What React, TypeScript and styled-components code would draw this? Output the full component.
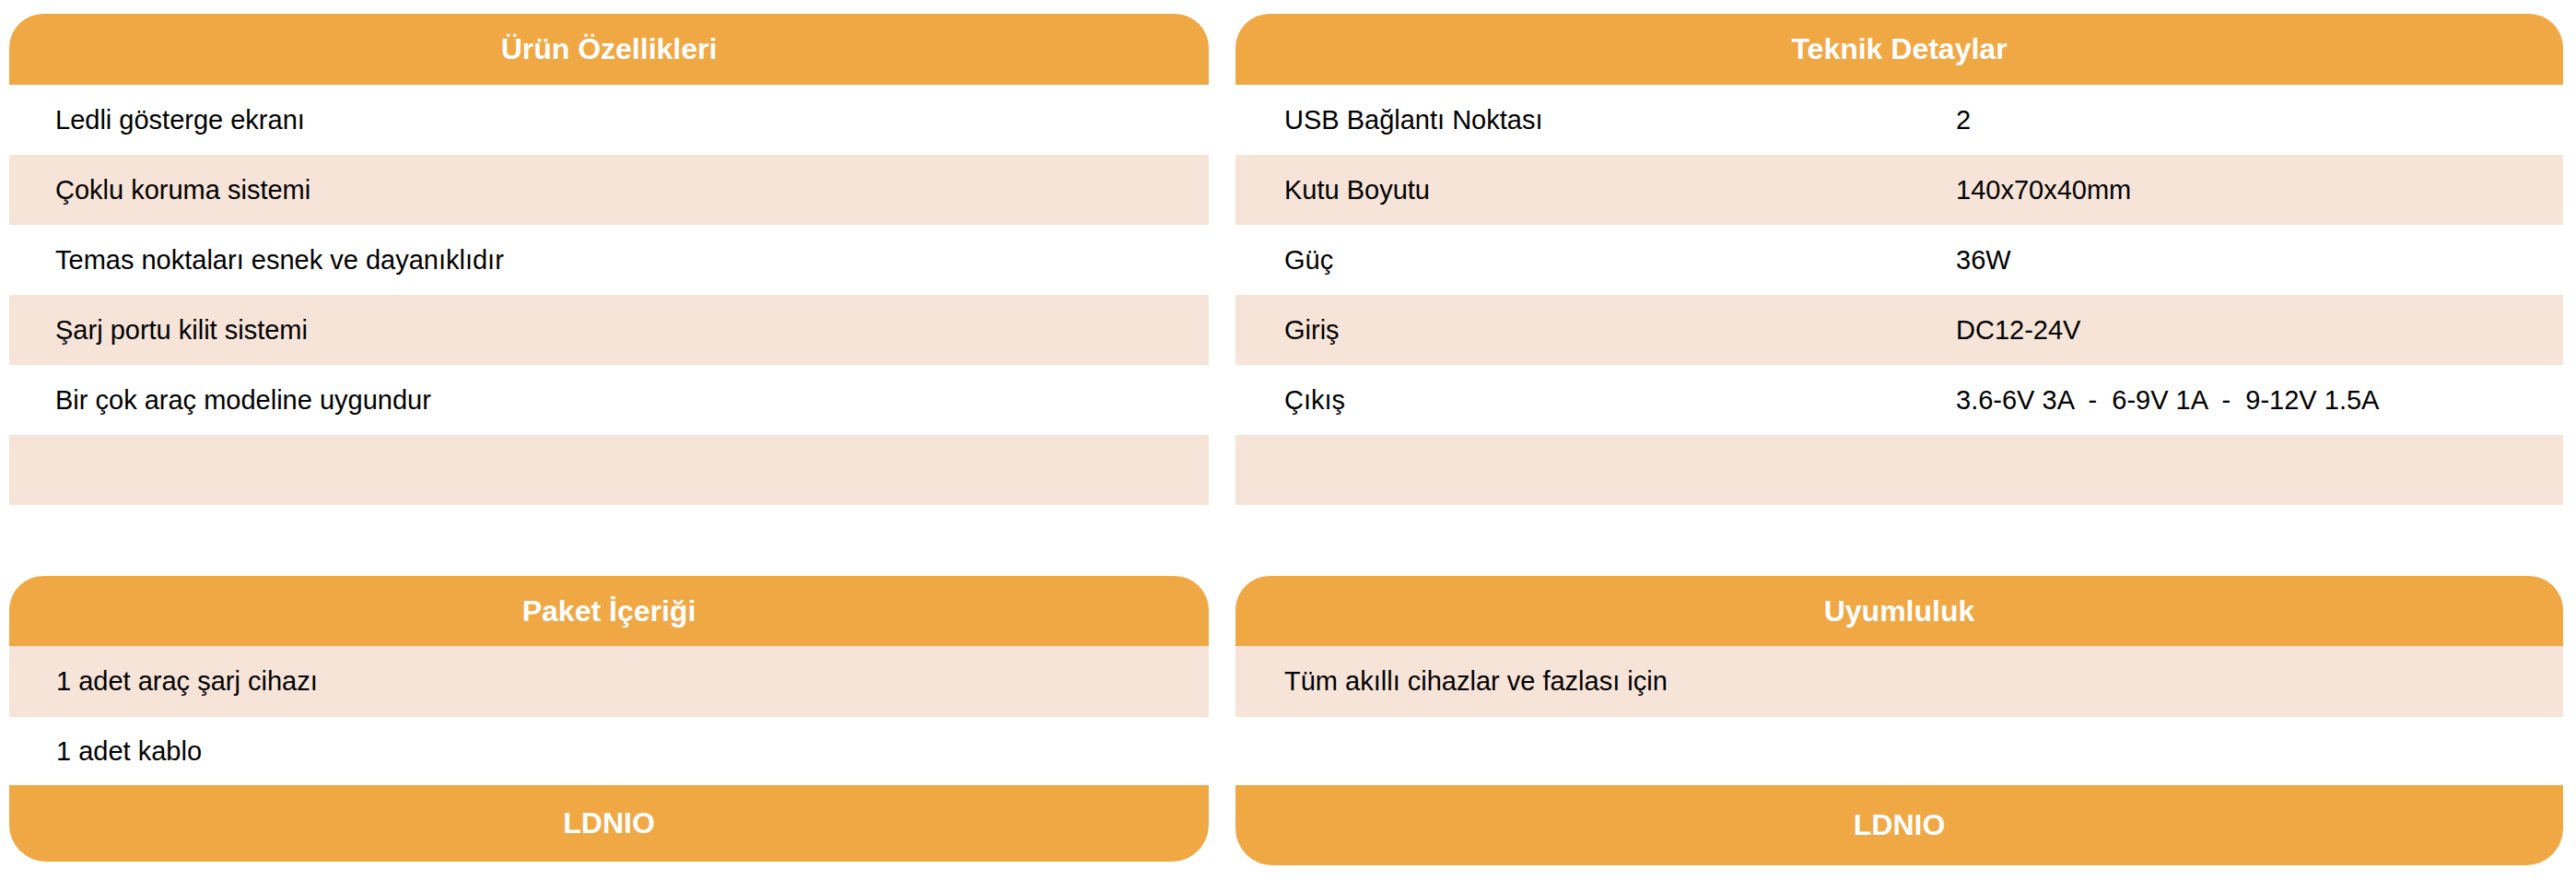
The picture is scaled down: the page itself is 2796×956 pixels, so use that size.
import React from "react";
import styled, { createGlobalStyle } from "styled-components";

const GlobalStyle = createGlobalStyle`
  html, body {
    margin: 0;
    padding: 0;
    background: #ffffff;
  }
  body {
    font-family: "Liberation Sans", Arial, Helvetica, sans-serif;
    color: #000;
  }
`;

const ORANGE = "#f0a845";
const PINK = "#f7e4d8";

const Page = styled.div`
  display: grid;
  grid-template-columns: 1302px 1441px;
  column-gap: 29px;
  row-gap: 77px;
  padding: 15px 0 0 10px;
  width: 2796px;
  box-sizing: border-box;
`;

const Card = styled.section`
  display: flex;
  flex-direction: column;
`;

const CardHeader = styled.h2<{ $h?: number }>`
  margin: 0;
  height: ${(p) => p.$h ?? 77}px;
  background: ${ORANGE};
  border-radius: 37px 37px 0 0;
  color: #ffffff;
  font-size: 32px;
  font-weight: 700;
  display: flex;
  align-items: center;
  justify-content: center;
`;

const Row = styled.div<{ $shaded?: boolean; $pad: number; $cols?: string; $h?: number }>`
  height: ${(p) => p.$h ?? 76}px;
  background: ${(p) => (p.$shaded ? PINK : "#ffffff")};
  display: grid;
  grid-template-columns: ${(p) => p.$cols ?? "1fr"};
  align-items: center;
  padding-left: ${(p) => p.$pad}px;
  font-size: 29px;
  box-sizing: border-box;
`;

const Cell = styled.span`
  white-space: pre;
`;

const Footer = styled.div<{ $h: number }>`
  height: ${(p) => p.$h}px;
  background: ${ORANGE};
  border-radius: 0 0 40px 40px;
  color: #ffffff;
  font-size: 32px;
  font-weight: 700;
  display: flex;
  align-items: center;
  justify-content: center;
`;

const features = [
  "Ledli gösterge ekranı",
  "Çoklu koruma sistemi",
  "Temas noktaları esnek ve dayanıklıdır",
  "Şarj portu kilit sistemi",
  "Bir çok araç modeline uygundur",
  "",
];

const specs: [string, string][] = [
  ["USB Bağlantı Noktası", "2"],
  ["Kutu Boyutu", "140x70x40mm"],
  ["Güç", "36W"],
  ["Giriş", "DC12-24V"],
  ["Çıkış", "3.6-6V 3A  -  6-9V 1A  -  9-12V 1.5A"],
  ["", ""],
];

const SPEC_COLS = "729px 1fr";

export default function App() {
  return (
    <>
      <GlobalStyle />
      <Page>
        <Card>
          <CardHeader>Ürün Özellikleri</CardHeader>
          {features.map((f, i) => (
            <Row key={i} $shaded={i % 2 === 1} $pad={50}>
              <Cell>{f}</Cell>
            </Row>
          ))}
        </Card>
        <Card>
          <CardHeader>Teknik Detaylar</CardHeader>
          {specs.map(([k, v], i) => (
            <Row key={i} $shaded={i % 2 === 1} $pad={53} $cols={SPEC_COLS}>
              <Cell>{k}</Cell>
              <Cell>{v}</Cell>
            </Row>
          ))}
        </Card>
        <Card>
          <CardHeader $h={76}>Paket İçeriği</CardHeader>
          <Row $shaded $pad={51} $h={77}>
            <Cell>1 adet araç şarj cihazı</Cell>
          </Row>
          <Row $pad={51} $h={74}>
            <Cell>1 adet kablo</Cell>
          </Row>
          <Footer $h={83}>LDNIO</Footer>
        </Card>
        <Card>
          <CardHeader $h={76}>Uyumluluk</CardHeader>
          <Row $shaded $pad={53} $h={77}>
            <Cell>Tüm akıllı cihazlar ve fazlası için</Cell>
          </Row>
          <Row $pad={53} $h={74} />
          <Footer $h={87}>LDNIO</Footer>
        </Card>
      </Page>
    </>
  );
}
